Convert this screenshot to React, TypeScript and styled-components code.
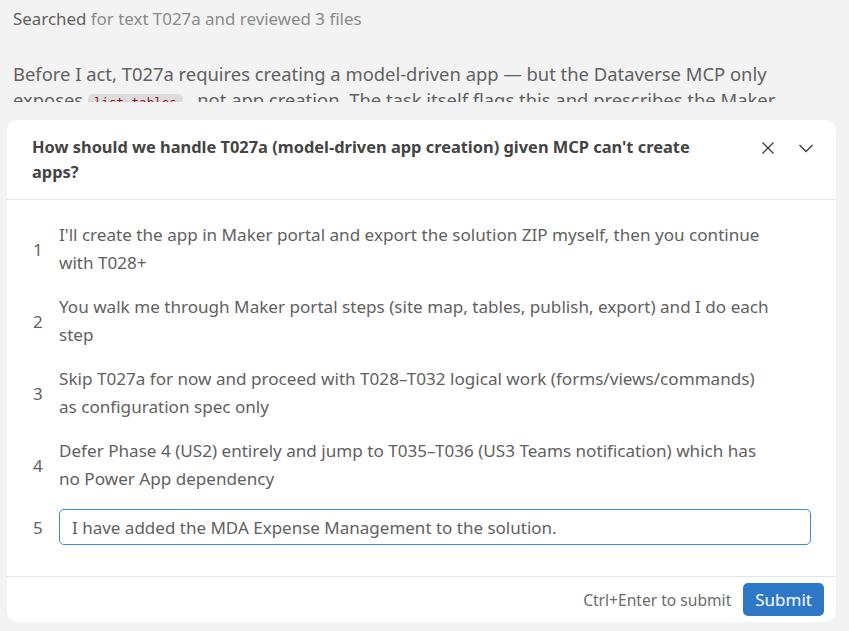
import React, { useState } from "react";
import styled, { createGlobalStyle } from "styled-components";

const GlobalStyle = createGlobalStyle`
  html, body {
    margin: 0;
    padding: 0;
    background: #f3f3f3;
  }
  body {
    font-family: "Noto Sans", "Open Sans", sans-serif;
    color: #616161;
  }
`;

const Page = styled.div`
  width: 849px;
  height: 631px;
  box-sizing: border-box;
  padding: 8px 13px 9px 7px;
  display: flex;
  flex-direction: column;
  overflow: hidden;
`;

// transcript above the question card, cut off where the card overlays it
const Transcript = styled.div`
  padding-left: 6px;
  height: 94px;
  overflow: hidden;
  flex-shrink: 0;
`;

const Activity = styled.div`
  font-size: 16.9px;
  line-height: 22px;
  color: #8b8b8b;
  span {
    color: #616161;
  }
`;

const Para = styled.p`
  margin: 31px 0 0;
  font-size: 18.4px;
  line-height: 26px;
  color: #616161;
  width: 800px;
`;

const Code = styled.code`
  font-family: "DejaVu Sans Mono", monospace;
  font-size: 12.5px;
  color: #a31515;
  background: #dcdcdc;
  border-radius: 5px;
  padding: 1px 6px;
`;

const Card = styled.div`
  margin-top: 18px;
  flex: 1;
  background: #fff;
  border-radius: 10px;
  display: flex;
  flex-direction: column;
`;

const Header = styled.div`
  display: flex;
  align-items: flex-start;
  padding: 14px 18px 15px 25px;
  border-bottom: 1px solid #e5e5e5;
`;

const Title = styled.div`
  flex: 1;
  font-size: 16.4px;
  font-weight: 700;
  line-height: 25px;
  color: #444;
  max-width: 690px;
`;

const IconGroup = styled.div`
  margin-left: auto;
  display: flex;
  gap: 14px;
  padding-top: 2px;
`;

const IconButton = styled.button`
  width: 24px;
  height: 24px;
  border: none;
  background: transparent;
  padding: 0;
  display: flex;
  align-items: center;
  justify-content: center;
  color: #3b3b3b;
  cursor: pointer;
`;

const Options = styled.div`
  padding: 21px 25px 31px 26px;
  display: flex;
  flex-direction: column;
  gap: 16px;
  flex: 1;
`;

const Option = styled.div`
  display: flex;
  align-items: center;
`;

const Num = styled.div`
  width: 26px;
  flex-shrink: 0;
  font-size: 17px;
  color: #616161;
`;

const OptionText = styled.div`
  font-size: 17.1px;
  line-height: 28px;
  color: #616161;
  max-width: 710px;
`;

const Input = styled.input<{ $focused: boolean }>`
  flex: 1;
  height: 36px;
  box-sizing: border-box;
  border: 1px solid ${(p) => (p.$focused ? "#3c8ae0" : "#cfcfcf")};
  border-radius: 5px;
  padding: 0 12px;
  font-family: "Noto Sans", sans-serif;
  font-size: 17px;
  color: #616161;
  outline: none;
`;

const Footer = styled.div`
  border-top: 1px solid #e5e5e5;
  display: flex;
  align-items: center;
  justify-content: flex-end;
  gap: 12px;
  padding: 6px 12px 6px;
`;

const Hint = styled.span`
  font-size: 15.6px;
  color: #6b6b6b;
`;

const Submit = styled.button`
  height: 33px;
  padding: 0 12px;
  border: none;
  border-radius: 5px;
  background: #2f78c8;
  color: #fff;
  font-family: "Noto Sans", sans-serif;
  font-size: 17px;
  cursor: pointer;
`;

const options = [
  "I'll create the app in Maker portal and export the solution ZIP myself, then you continue with T028+",
  "You walk me through Maker portal steps (site map, tables, publish, export) and I do each step",
  "Skip T027a for now and proceed with T028–T032 logical work (forms/views/commands) as configuration spec only",
  "Defer Phase 4 (US2) entirely and jump to T035–T036 (US3 Teams notification) which has no Power App dependency",
];

export default function App() {
  const [answer, setAnswer] = useState("I have added the MDA Expense Management to the solution.");
  return (
    <>
      <GlobalStyle />
      <Page>
        <Transcript>
          <Activity>
            <span>Searched</span> for text T027a and reviewed 3 files
          </Activity>
          <Para>
            Before I act, T027a requires creating a model-driven app — but the Dataverse MCP only
            exposes <Code>list_tables</Code> , not app creation. The task itself flags this and prescribes the Maker portal
          </Para>
        </Transcript>
        <Card>
          <Header>
            <Title>How should we handle T027a (model-driven app creation) given MCP can't create apps?</Title>
            <IconGroup>
              <IconButton aria-label="Close">
                <svg width="16" height="16" viewBox="0 0 16 16" fill="none" stroke="currentColor" strokeWidth="1.3">
                  <path d="M2.5 2.5l11 11M13.5 2.5l-11 11" />
                </svg>
              </IconButton>
              <IconButton aria-label="Collapse">
                <svg width="16" height="16" viewBox="0 0 16 16" fill="none" stroke="currentColor" strokeWidth="1.3">
                  <path d="M1.5 5l6.5 6.5L14.5 5" />
                </svg>
              </IconButton>
            </IconGroup>
          </Header>
          <Options>
            {options.map((o, i) => (
              <Option key={i}>
                <Num>{i + 1}</Num>
                <OptionText>{o}</OptionText>
              </Option>
            ))}
            <Option>
              <Num>5</Num>
              <Input $focused value={answer} onChange={(e) => setAnswer(e.target.value)} />
            </Option>
          </Options>
          <Footer>
            <Hint>Ctrl+Enter to submit</Hint>
            <Submit>Submit</Submit>
          </Footer>
        </Card>
      </Page>
    </>
  );
}
